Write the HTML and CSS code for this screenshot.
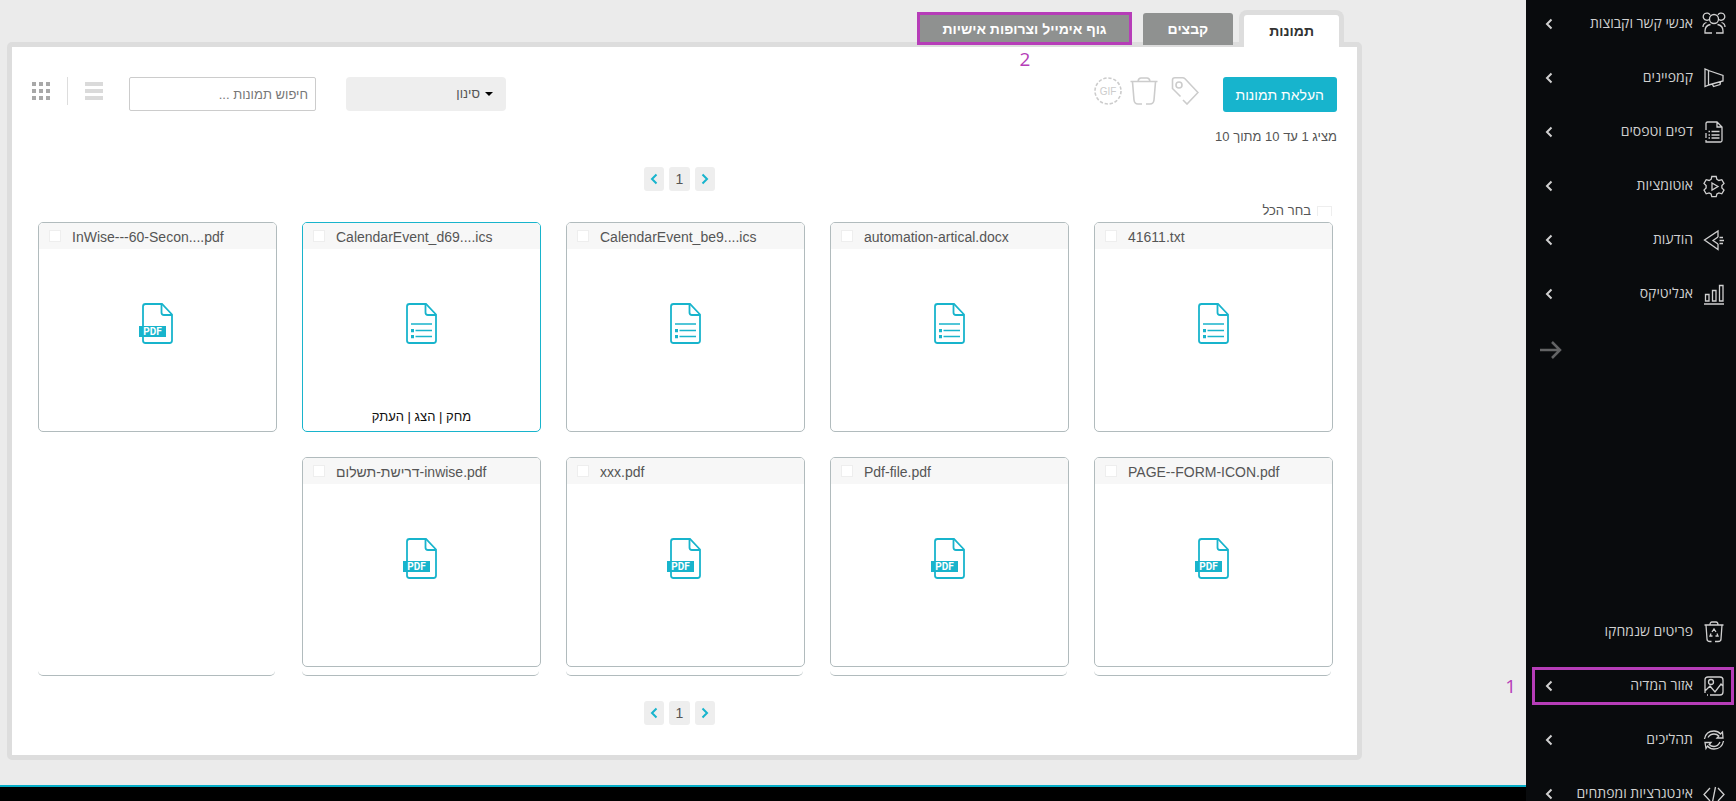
FILE: index.html
```
<!DOCTYPE html>
<html lang="he" dir="rtl">
<head>
<meta charset="utf-8">
<title>אזור המדיה</title>
<link rel="stylesheet" href="styles.css">
</head>
<body>
<svg class="defs" aria-hidden="true">
  <symbol id="i-doc" viewBox="0 0 37 41"><g fill="none" stroke="#18b4cc" stroke-width="1.8"><path d="M23 1H6.500Q4 1 4 3.500V37.500Q4 40 6.500 40H30.500Q33 40 33 37.500V11.500Z" /><path d="M22.500 1V9.500Q22.500 12 25 12H33"/><path d="M8 21H29M12.500 27.500H29M12.500 33.500H29" stroke-width="1.600"/></g><path d="M8 26h3v3.200H8zM8 32h3v3.200H8z" fill="#18b4cc"/></symbol>
  <symbol id="i-pdf" viewBox="0 0 37 41"><g fill="none" stroke="#18b4cc" stroke-width="1.8"><path d="M23 1H6.500Q4 1 4 3.500V37.500Q4 40 6.500 40H30.500Q33 40 33 37.500V11.500Z"/><path d="M22.500 1V9.500Q22.500 12 25 12H33"/></g><path d="M0 23h27v11H0z" fill="#18b4cc"/><text x="13.500" y="32" text-anchor="middle" direction="ltr" font-family="Roboto, sans-serif" font-size="10" font-weight="700" fill="#fff">PDF</text></symbol>
  <symbol id="i-chev" viewBox="0 0 8 12"><path d="M6.500 1.500 2 6l4.500 4.500" fill="none" stroke="currentColor" stroke-width="2"/></symbol>
</svg>
<div class="app">
  <nav class="sidebar" aria-label="ראשי">
    <ul class="menu">
      <li><a class="item" href="#"><svg class="ico" viewBox="0 0 24 24"><circle cx="12" cy="7" r="4.500"/><path d="M7 7.500A3.600 3.600 0 1 1 8 3M17 7.500A3.600 3.600 0 1 0 16 3M10 21H3V19Q3 13.500 8.500 12.500M14 21H21V19Q21 13.500 15.500 12.500M1 15Q1 11.500 4.500 10.500M23 15Q23 11.500 19.500 10.500"/></svg><span>אנשי קשר וקבוצות</span><svg class="chev"><use href="#i-chev"/></svg></a></li>
      <li><a class="item" href="#"><svg class="ico" viewBox="0 0 24 24"><path d="M3 3V20.500L6.500 19V4.500ZM6.500 4.500 21 9.500V15L6.500 19M10.500 18.500 11.500 20.500 18 18.500 18.500 16"/></svg><span>קמפיינים</span><svg class="chev"><use href="#i-chev"/></svg></a></li>
      <li><a class="item" href="#"><svg class="ico" viewBox="0 0 24 24"><path d="M4 13V18M4 10V3.500Q4 2 5.500 2H15L20 7V20.500Q20 22 18.500 22H4V20M15 2V7H20M9.500 11.500H17.500M9.500 15H17.500M9.500 18H17.500M6.500 11.500H8M6.500 15H8M6.500 18H8"/></svg><span>דפים וטפסים</span><svg class="chev"><use href="#i-chev"/></svg></a></li>
      <li><a class="item" href="#"><svg class="ico" viewBox="0 0 24 24"><path d="M9.800 2.500h4.400l.7 2.900 2 1.100 2.900-.8 2.200 3.800-2.100 2.100v2.300l2.100 2.100-2.200 3.800-2.900-.9-2 1.100-.7 2.700H9.800l-.7-2.700-2-1.100-2.900.9L2 16l2.100-2.100v-2.300L2 9.500l2.200-3.800 2.900.8 2-1.100Z"/><path d="m10 9 6 3.500-6 3.500Z"/></svg><span>אוטומציות</span><svg class="chev"><use href="#i-chev"/></svg></a></li>
      <li><a class="item" href="#"><svg class="ico" viewBox="0 0 24 24"><path d="M16 9V3L2.500 12 16 21.500V16M16 9 11 12.500 16 16M17.500 9.500H21M17.500 12.500H22M17.500 15.500H21"/></svg><span>הודעות</span><svg class="chev"><use href="#i-chev"/></svg></a></li>
      <li><a class="item" href="#"><svg class="ico" viewBox="0 0 24 24"><path d="M3.500 12.500H7V19H3.500ZM10.500 8.500H14V19H10.500ZM17.500 3.500H21V19H17.500ZM2 22H22"/></svg><span>אנליטיקס</span><svg class="chev"><use href="#i-chev"/></svg></a></li>
    </ul>
    <button class="collapse" aria-label="כווץ תפריט"><svg viewBox="0 0 22 18"><path d="M0 9H20M12 1 20 9 12 17"/></svg></button>
    <ul class="menu menu-bottom">
      <li><a class="item" href="#"><svg class="ico" viewBox="0 0 24 24"><path d="M2.500 5H21.500M8 5Q8 2 10 2H14Q16 2 16 5M4 5 5 19Q5 21.500 8 21.500H9.500M20 5 19 19Q19 21.500 16 21.500H13"/><path d="M10 12 12 9 14 12M15 13.500 16 16H13.500M10.500 16H8L9 13.500"/></svg><span>פריטים שנמחקו</span></a></li>
      <li><a class="item marked" href="#"><svg class="ico" viewBox="0 0 24 24"><path d="M3 19V6Q3 3 6 3H18Q21 3 21 6V18Q21 21 18 21H8M3 17 8 12 13 18 19 10 21 12M5 21H6"/><circle cx="9" cy="8" r="2.500"/></svg><span>אזור המדיה</span><svg class="chev"><use href="#i-chev"/></svg></a><span class="note note-1">1</span></li>
      <li><a class="item" href="#"><svg class="ico" viewBox="0 0 24 24"><path d="M2.500 11Q4 3 12 3Q16 3 18.500 6L20.500 4 21 10 15 10 16.800 8Q15 6 12 6Q8 6 6 9.500M21.500 13Q20 21 12 21Q8 21 5.500 18L4 20.500 3 14.500 9 14.500 7.200 16.500Q9 18.500 12 18.500Q16 18.500 18 14"/></svg><span>תהליכים</span><svg class="chev"><use href="#i-chev"/></svg></a></li>
      <li><a class="item" href="#"><svg class="ico" viewBox="0 0 24 24"><path d="M8 6 2 12.500 8 19M16 6 22 12.500 16 19M13.500 5 10.500 20"/></svg><span>אינטגרציות ומפתחים</span><svg class="chev"><use href="#i-chev"/></svg></a></li>
    </ul>
  </nav>
  <div class="page">
    <main class="content">
      <div class="tabs" role="tablist">
        <button class="tab active" role="tab" aria-selected="true">תמונות</button>
        <button class="tab" role="tab">קבצים</button>
        <button class="tab tab-marked" role="tab">גוף אימייל וצרופות אישיות<span class="note note-2">2</span></button>
      </div>
      <section class="panel">
        <div class="toolbar">
          <button class="upload">העלאת תמונות</button>
          <div class="tools">
            <button class="tool tool-tag" aria-label="תגית"><svg viewBox="1 1 28 28"><path d="M10.500 20.500 2.500 12.500V4Q2.500 1.800 5 1.800H12.500Q14 1.800 15 2.800L28 16.500 17 28 13 24"/><circle cx="9" cy="9" r="3"/></svg></button>
            <button class="tool" aria-label="מחיקה"><svg viewBox="1 1 28 28"><path d="M1.500 5.500H28.500M9 5.500Q9.500 2 12 2H18Q20.500 2 21 5.500M3.500 6 5 24Q5.500 28 9 28H13M26.500 6 25 24Q24.500 28 21 28H17"/></svg></button>
            <button class="tool" aria-label="GIF"><svg viewBox="1 1 28 28"><circle cx="15" cy="15" r="13" stroke-dasharray="3.300 1.800"/><text x="15" y="19" text-anchor="middle" direction="ltr">GIF</text></svg></button>
          </div>
          <div class="spacer"></div>
          <button class="filter"><span class="caret"></span>סינון</button>
          <input class="search" type="text" aria-label="חיפוש" placeholder="חיפוש תמונות ...">
          <div class="views">
            <button class="view" aria-label="רשימה"><svg viewBox="0 0 18 18"><path d="M0 0h18v4H0zM0 7h18v4H0zM0 14h18v4H0z" fill="#dadada"/></svg></button>
            <button class="view view-grid" aria-label="רשת"><svg viewBox="0 0 18 18"><path d="M0 0h4v4H0zM7 0h4v4H7zM14 0h4v4h-4zM0 7h4v4H0zM7 7h4v4H7zM14 7h4v4h-4zM0 14h4v4H0zM7 14h4v4H7zM14 14h4v4h-4z" fill="#a8a8a8"/></svg></button>
          </div>
        </div>
        <p class="summary">מציג 1 עד 10 מתוך 10</p>
        <div class="pager"><button aria-label="הקודם"><svg class="flip"><use href="#i-chev"/></svg></button><button class="num">1</button><button aria-label="הבא"><svg><use href="#i-chev"/></svg></button></div>
        <label class="all"><input class="check" type="checkbox">בחר הכל</label>
        <div class="cards">
          <article class="card"><label class="head"><input class="check" type="checkbox">41611.txt</label><svg class="file"><use href="#i-doc"/></svg></article>
          <article class="card"><label class="head"><input class="check" type="checkbox">automation-artical.docx</label><svg class="file"><use href="#i-doc"/></svg></article>
          <article class="card"><label class="head"><input class="check" type="checkbox">CalendarEvent_be9....ics</label><svg class="file"><use href="#i-doc"/></svg></article>
          <article class="card current"><label class="head"><input class="check" type="checkbox">CalendarEvent_d69....ics</label><svg class="file"><use href="#i-doc"/></svg><div class="actions"><a href="#">מחק</a> | <a href="#">הצג</a> | <a href="#">העתק</a></div></article>
          <article class="card"><label class="head"><input class="check" type="checkbox">InWise---60-Secon....pdf</label><svg class="file"><use href="#i-pdf"/></svg></article>
          <article class="card"><label class="head"><input class="check" type="checkbox">PAGE--FORM-ICON.pdf</label><svg class="file"><use href="#i-pdf"/></svg></article>
          <article class="card"><label class="head"><input class="check" type="checkbox">Pdf-file.pdf</label><svg class="file"><use href="#i-pdf"/></svg></article>
          <article class="card"><label class="head"><input class="check" type="checkbox">xxx.pdf</label><svg class="file"><use href="#i-pdf"/></svg></article>
          <article class="card"><label class="head"><input class="check" type="checkbox">דרישת-תשלום-inwise.pdf</label><svg class="file"><use href="#i-pdf"/></svg></article>
        </div>
        <div class="edges"><i></i><i></i><i></i><i></i><i></i></div>
        <div class="pager"><button aria-label="הקודם"><svg class="flip"><use href="#i-chev"/></svg></button><button class="num">1</button><button aria-label="הבא"><svg><use href="#i-chev"/></svg></button></div>
      </section>
    </main>
    <footer class="footer">כל הזכויות שמורות</footer>
  </div>
</div>
</body>
</html>
```
FILE: styles.css
```
* { box-sizing: border-box; }
body { margin: 0; background: #ebebeb; color: #555; font: 14px/20px "Liberation Sans", Arial, sans-serif; overflow: hidden; }
button, input { font: inherit; color: inherit; }
button { border: 0; padding: 0; background: none; cursor: pointer; }
a { color: inherit; text-decoration: none; }
svg { display: block; }
.defs { position: absolute; width: 0; height: 0; }
.app { display: flex; height: 100vh; }

.sidebar { flex: 0 0 210px; display: flex; flex-direction: column; padding-top: 5px; background: #090b0d; color: #d0d0d0; font-family: "Open Sans", sans-serif; }
.menu { display: flex; flex-direction: column; gap: 16px; margin: 0; padding: 0 2px 0 6px; list-style: none; }
.menu li { position: relative; }
.item { display: flex; align-items: center; height: 38px; padding: 0 5px 0 10px; border: 3px solid transparent; }
.item span { margin-right: 9px; line-height: 20px; padding-bottom: 2px; }
.marked { border-color: #b63db8; }
.ico { width: 24px; height: 24px; fill: none; stroke: #d0d0d0; stroke-width: 1.3; }
.chev { width: 8px; height: 12px; margin-right: auto; }
.collapse { align-self: flex-end; width: 22px; height: 18px; margin: 28px 0 0 14px; }
.collapse svg { fill: none; stroke: #636465; stroke-width: 2.5; }
.menu-bottom { margin-top: auto; margin-bottom: -12px; }
.note { position: absolute; color: #b63db8; font: 400 19px/20px "Open Sans", sans-serif; }
.note-1 { right: 218px; top: 9px; }
.note-2 { top: 34px; left: 99px; }

.page { flex: 1; min-width: 0; display: flex; flex-direction: column; }
.content { padding: 10px 164px 25px 7px; }
.tabs { position: relative; display: flex; align-items: flex-end; padding-right: 18px; }
.tab { position: relative; height: 32px; margin-bottom: -3px; padding: 0 25px; border-radius: 3px 3px 0 0; background: #8f9190; color: #fff; font-weight: 700; }
.tab + .tab { margin-right: 6px; }
.active { height: 37px; margin-bottom: -5px; padding: 0 25px; border: 5px solid #ddd; border-bottom: 0; border-radius: 8px 8px 0 0; background: #fff; color: #333; }
.tab.tab-marked { height: 33px; margin-right: 11px; padding: 0 22px; border: 3px solid #b63db8; border-radius: 0; }

.panel { display: flex; flex-direction: column; padding: 30px 20px 30px 10px; border: 5px solid #ddd; border-radius: 5px; background: #fff; }
.toolbar { display: flex; align-items: flex-start; }
.upload { height: 35px; padding: 0 13px; border-radius: 3px; background: #17b4cd; color: #fff; }
.tools { display: flex; gap: 8px; margin-right: 24px; }
.tool svg { width: 28px; height: 28px; fill: none; stroke: #ccc; stroke-width: 1.6; }
.tool-tag { margin-left: 5px; }
.tool text { fill: #ccc; stroke: none; font-size: 10px; }
.spacer { flex: 1; }
.filter { display: flex; align-items: center; gap: 5px; width: 160px; height: 34px; padding: 0 13px; border-radius: 4px; background: #eee; font-size: 13px; }
.caret { border: 4px solid transparent; border-top-color: #000; border-bottom: 0; }
.search { width: 187px; height: 34px; margin-right: 30px; padding: 0 7px; border: 1px solid #ccc; border-radius: 2px; font-size: 13px; }
.search::placeholder { color: #777; opacity: 1; }
.views { display: flex; margin: 0 26px 0 10px; }
.view { height: 28px; padding-left: 17px; }
.view svg { width: 18px; height: 18px; }
.view-grid { padding: 0 17px 0 0; border-right: 1px solid #ddd; }
.summary { margin: 15px 0 0; font-size: 13px; }
.pager { display: flex; justify-content: center; gap: 5px; margin-top: 20px; }
.pager button { display: grid; place-items: center; width: 20px; height: 24px; border-radius: 3px; background: #eee; }
.pager svg { width: 8px; height: 12px; color: #17b4cd; }
.pager .num { width: 21px; }
.flip { transform: scaleX(-1); }
.check { appearance: none; flex: none; width: 12px; height: 12px; margin: 0; border: 1px solid #eee; background: #fff; }
.all { align-self: flex-start; display: flex; gap: 6px; height: 13px; margin: 12px 5px 0 0; font-size: 13px; line-height: 16px; overflow: hidden; }
.all .check { width: 15px; height: 15px; margin-top: 3px; }
.cards, .edges { display: grid; grid-template-columns: repeat(5, 1fr); gap: 25px; padding: 0 4px 0 16px; }
.cards { margin-top: 6px; }
.card { position: relative; height: 210px; border: 1px solid #b1bbbd; border-radius: 5px; background: #fff; overflow: hidden; }
.current { border-color: #18b4cc; }
.head { display: flex; direction: ltr; align-items: center; gap: 11px; height: 26px; padding: 2px 0 0 10px; background: #f7f7f7; }
.head .check { margin-bottom: 2px; }
.file { width: 37px; height: 41px; margin: 54px auto 0; }
.actions { margin-top: 63px; text-align: center; color: #111; font-size: 13px; line-height: 20px; }
.edges i { height: 9px; margin-left: 0; margin-right: 2px; border-bottom: 1px solid #b1bbbd; border-radius: 0 0 5px 5px; }
.edges + .pager { margin-top: 25px; }

.footer { flex: 1; padding-top: 10px; border-top: 2px solid #06aec8; background: #000; color: #fff; text-align: center; }
```
